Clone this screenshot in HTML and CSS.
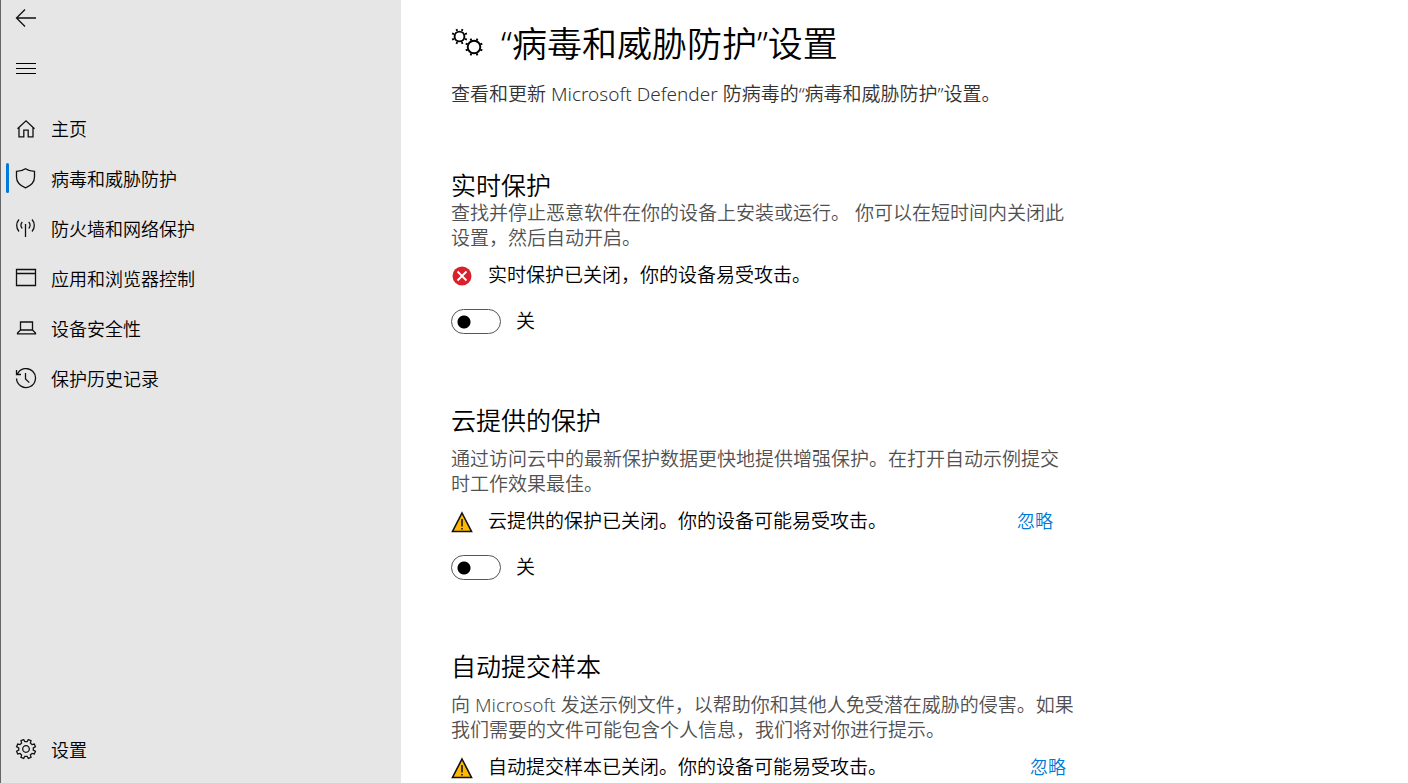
FILE: index.html
```html
<!DOCTYPE html>
<html lang="zh-CN">
  <head>
    <meta charset="UTF-8" />
    <meta name="viewport" content="width=device-width, initial-scale=1.0" />
    <title>“病毒和威胁防护”设置</title>
    <link rel="stylesheet" href="styles.css">
  </head>
  <body>
    <aside class="sidebar">
      <button class="icon-button" aria-label="返回">
        <svg class="icon" viewBox="0 0 22 22"><path d="M21 11H1.500M10 2.500L1.500 11l8.500 8.500" /></svg>
      </button>
      <button class="icon-button" aria-label="菜单">
        <svg class="icon thin" viewBox="0 0 22 22"><path d="M1 6.500h20M1 11.500h20M1 16.500h20" /></svg>
      </button>
      <nav class="nav">
        <a class="nav-item" href="#">
          <svg class="icon" viewBox="0 0 22 22"><path d="M2.500 10.800L11 2.800 19.500 10.800M4 9.500v9.300h4.800v-6.600h4.400v6.600h4.800V9.500" /></svg>
          主页
        </a>
        <a class="nav-item active" href="#">
          <svg class="icon" viewBox="0 0 22 22"><path d="M10.500.7c2.400 1.700 5.300 2.600 9 2.700v5.600c0 5.300-3.400 8.600-9 10.800-5.600-2.200-9-5.500-9-10.800V3.400c3.700-.1 6.600-1 9-2.700z" /></svg>
          病毒和威胁防护
        </a>
        <a class="nav-item" href="#">
          <svg class="icon" viewBox="0 0 22 22"><path d="M10.500 6v13M7.300 4a4.500 4.500 0 0 0 0 6.500M13.700 4a4.500 4.500 0 0 1 0 6.500M4 1.500a9 9 0 0 0 0 12M17 1.500a9 9 0 0 1 0 12" /></svg>
          防火墙和网络保护
        </a>
        <a class="nav-item" href="#">
          <svg class="icon" viewBox="0 0 22 22"><path d="M1.500 1.500h19v16h-19zM1.500 5.500h19" /></svg>
          应用和浏览器控制
        </a>
        <a class="nav-item" href="#">
          <svg class="icon" viewBox="0 0 22 22"><path d="M5.500 4h12v8h-12zM5.500 12l-3 3v.8h18V15l-3-3" /></svg>
          设备安全性
        </a>
        <a class="nav-item" href="#">
          <svg class="icon" viewBox="0 0 22 22"><path d="M2.300 6.200A9.500 9.500 0 1 1 1.500 10.500M1.500 2v4.500H6M10.500 5v6l3.800 3.600" /></svg>
          保护历史记录
        </a>
      </nav>
      <a class="nav-item settings" href="#">
        <svg class="icon" viewBox="-11 -10 22 22"><path d="M7.300 1.100L9.400 2.300 8.300 5 6 4.400 4.400 6 5 8.300 2.300 9.400 1.100 7.300H-1.100L-2.300 9.400-5 8.300-4.400 6-6 4.400-8.300 5-9.400 2.300-7.300 1.100V-1.100L-9.400-2.300-8.300-5-6-4.400-4.400-6-5-8.300-2.300-9.400-1.100-7.300H1.100L2.300-9.400 5-8.300 4.400-6 6-4.400 8.300-5 9.400-2.300 7.300-1.100Z" /><circle r="3.300" /></svg>
        设置
      </a>
    </aside>

    <main class="content">
      <h1 class="page-title">
        <svg class="gears" viewBox="0 0 34 34">
          <circle cx="8.500" cy="9.500" r="4.900" />
          <circle cx="23" cy="20" r="6.300" />
          <path d="M14.040 11.800l1.850.77M10.800 15.040l.77 1.850M6.200 15.040l-.77 1.850M2.960 11.800l-1.850.77M2.960 7.200l-1.850-.77M6.200 3.960l-.77-1.850M10.800 3.960l.77-1.850M14.040 7.200l1.850-.77" />
          <path d="M29.300 22.600l2 .84M25.600 26.300l.84 2M20.400 26.300l-.84 2M16.700 22.600l-2 .84M16.700 17.400l-2-.84M20.400 13.700l-.84-2M25.600 13.700l.84-2M29.300 17.400l2-.84" />
        </svg>
        “病毒和威胁防护”设置
      </h1>
      <p class="intro">查看和更新 Microsoft Defender 防病毒的“病毒和威胁防护”设置。</p>

      <section class="section">
        <h2 class="section-title tight">实时保护</h2>
        <p class="description">查找并停止恶意软件在你的设备上安装或运行。 你可以在短时间内关闭此设置，然后自动开启。</p>
        <div class="status">
          <svg class="status-icon" viewBox="0 0 22 22"><circle cx="11" cy="11" r="9.500" fill="#d9212c" /><path d="M6.500 6.500l9 9M15.500 6.500l-9 9" stroke="#fff" stroke-width="1.800" /></svg>
          <span>实时保护已关闭，你的设备易受攻击。</span>
        </div>
        <label class="toggle"><input type="checkbox" role="switch" />关</label>
      </section>

      <section class="section">
        <h2 class="section-title">云提供的保护</h2>
        <p class="description">通过访问云中的最新保护数据更快地提供增强保护。在打开自动示例提交时工作效果最佳。</p>
        <div class="status">
          <svg class="status-icon" viewBox="0 0 22 22"><path d="M11 2l9.500 18.500h-19z" fill="#ffb900" stroke="#111" stroke-width="1.600" /><path d="M11 8v7.500M11 17v1.500" stroke="#111" stroke-width="1.500" /></svg>
          <span>云提供的保护已关闭。你的设备可能易受攻击。</span>
          <a class="dismiss" href="#">忽略</a>
        </div>
        <label class="toggle"><input type="checkbox" role="switch" />关</label>
      </section>

      <section class="section">
        <h2 class="section-title">自动提交样本</h2>
        <p class="description">向 Microsoft 发送示例文件，以帮助你和其他人免受潜在威胁的侵害。如果我们需要的文件可能包含个人信息，我们将对你进行提示。</p>
        <div class="status wide">
          <svg class="status-icon" viewBox="0 0 22 22"><path d="M11 2l9.500 18.500h-19z" fill="#ffb900" stroke="#111" stroke-width="1.600" /><path d="M11 8v7.500M11 17v1.500" stroke="#111" stroke-width="1.500" /></svg>
          <span>自动提交样本已关闭。你的设备可能易受攻击。</span>
          <a class="dismiss" href="#">忽略</a>
        </div>
      </section>
    </main>
  </body>
</html>
```
FILE: styles.css
```css
* {
  box-sizing: border-box;
}

body {
  display: flex;
  height: 100vh;
  margin: 0;
  background-color: #fff;
  color: #000;
  font-family: "Noto Sans", "Noto Sans CJK SC", sans-serif;
  font-weight: 350;
  font-size: 19px;
  line-height: 25px;
}

a {
  text-decoration: none;
}

/* Sidebar */
.sidebar {
  display: flex;
  flex-direction: column;
  flex: 0 0 401px;
  padding-bottom: 8px;
  background-color: #e6e6e6;
  border-left: 1px solid #666;
}

.icon {
  width: 22px;
  height: 22px;
  flex-shrink: 0;
  fill: none;
  stroke: #111;
  stroke-width: 1.3;
}

.icon.thin {
  stroke: #000;
  stroke-width: 1;
}

.icon-button {
  display: flex;
  align-items: center;
  width: 50px;
  height: 36px;
  margin-bottom: 14px;
  padding: 0 14px;
  border: none;
  background: none;
  cursor: pointer;
}

.nav {
  margin-top: 4px;
}

.nav-item {
  position: relative;
  display: flex;
  align-items: center;
  gap: 14px;
  height: 50px;
  padding-left: 14px;
  color: #000;
  font-size: 18px;
}

.nav-item.active::before {
  content: "";
  position: absolute;
  left: 5px;
  top: 9px;
  width: 3px;
  height: 30px;
  border-radius: 2px;
  background-color: #0078d7;
}

.settings {
  margin-top: auto;
}

/* Content */
.content {
  flex: 1;
  padding: 20px 50px;
  overflow-y: auto;
  scrollbar-width: none;
}

.page-title {
  display: flex;
  align-items: center;
  gap: 16px;
  margin: 0;
  font-size: 35px;
  font-weight: 350;
  line-height: 48px;
}

.gears {
  width: 34px;
  height: 34px;
  fill: none;
  stroke: #000;
  stroke-width: 1.9;
}

.intro {
  margin: 14px 0 64px;
  color: #333;
}

.section {
  max-width: 625px;
  margin-bottom: 72px;
}

.section-title {
  margin: 0 0 13px;
  font-size: 25px;
  font-weight: 350;
  line-height: 28px;
}

.section-title.tight {
  margin-bottom: 2px;
}

.description {
  margin: 0 0 12px;
  color: #505050;
}

.status {
  display: flex;
  align-items: center;
  gap: 15px;
  max-width: 602px;
  margin-bottom: 21px;
}

.status.wide {
  max-width: 615px;
}

.status-icon {
  width: 22px;
  height: 22px;
  flex-shrink: 0;
}

.dismiss {
  margin-left: auto;
  color: #0078d7;
  font-size: 18px;
}

.toggle {
  display: flex;
  align-items: center;
  gap: 15px;
  width: max-content;
}

.toggle input {
  appearance: none;
  width: 50px;
  height: 25px;
  margin: 0;
  border: 1px solid #555;
  border-radius: 13px;
  background: radial-gradient(circle at 12px 12px, #000 6px, transparent 7px);
}

.toggle input:checked {
  border-color: #0078d7;
  background: radial-gradient(circle at 36px 12px, #fff 6px, #0078d7 7px);
}
```
